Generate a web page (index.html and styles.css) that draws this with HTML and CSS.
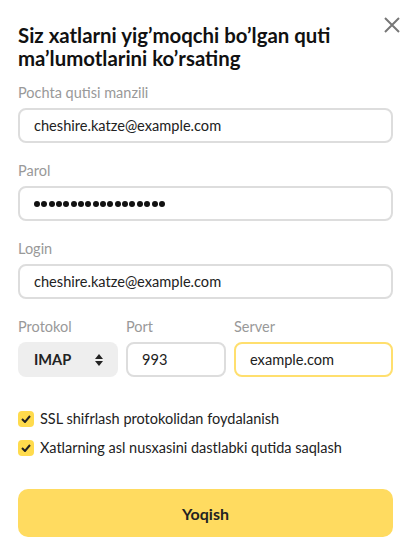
FILE: index.html
```html
<!DOCTYPE html>
<html>
<head>
<meta charset="utf-8">
<link rel="stylesheet" href="styles.css">
</head>
<body>
<div class="dialog">
  <button class="close" aria-label="close">
    <svg width="16" height="16" viewBox="0 0 16 16"><path d="M1 1L15 15M15 1L1 15" stroke="#777" stroke-width="2" fill="none"/></svg>
  </button>
  <h1 class="title">Siz xatlarni yig’moqchi bo’lgan quti ma’lumotlarini ko’rsating</h1>
  <div class="field">
    <div class="label">Pochta qutisi manzili</div>
    <div class="input">cheshire.katze@example.com</div>
  </div>
  <div class="field">
    <div class="label">Parol</div>
    <div class="input password" aria-label="password"><span class="dot"></span><span class="dot"></span><span class="dot"></span><span class="dot"></span><span class="dot"></span><span class="dot"></span><span class="dot"></span><span class="dot"></span><span class="dot"></span><span class="dot"></span><span class="dot"></span><span class="dot"></span><span class="dot"></span><span class="dot"></span><span class="dot"></span><span class="dot"></span><span class="dot"></span><span class="dot"></span></div>
  </div>
  <div class="field">
    <div class="label">Login</div>
    <div class="input">cheshire.katze@example.com</div>
  </div>
  <div class="row">
    <div class="field col-proto">
      <div class="label">Protokol</div>
      <div class="select">IMAP
        <svg class="arrows" width="10" height="14" viewBox="0 0 10 14"><path d="M5 1L9 6H1Z M5 13L9 8H1Z" fill="#222"/></svg>
      </div>
    </div>
    <div class="field col-port">
      <div class="label">Port</div>
      <div class="input small">993</div>
    </div>
    <div class="field col-server">
      <div class="label">Server</div>
      <div class="input small focused">example.com</div>
    </div>
  </div>
  <div class="checks">
    <label class="check"><span class="box"><svg width="10" height="8" viewBox="0 0 10 8"><path d="M1 4L4 7L9 1" stroke="#222" stroke-width="2" fill="none"/></svg></span>SSL shifrlash protokolidan foydalanish</label>
    <label class="check"><span class="box"><svg width="10" height="8" viewBox="0 0 10 8"><path d="M1 4L4 7L9 1" stroke="#222" stroke-width="2" fill="none"/></svg></span>Xatlarning asl nusxasini dastlabki qutida saqlash</label>
  </div>
  <button class="submit">Yoqish</button>
</div>
</body>
</html>
```
FILE: styles.css
```css
* { box-sizing: border-box; }
body {
  margin: 0;
  background: #fff;
  font-family: Lato, "Noto Sans", sans-serif;
  color: #222;
}
.dialog {
  position: relative;
  padding: 24px 17px 0 18px;
}
.close {
  position: absolute;
  top: 17px;
  right: 10px;
  border: 0;
  background: none;
  padding: 0;
  width: 16px;
  height: 16px;
}
.close svg { display: block; }
.title {
  margin: 0 0 14px;
  font-size: 20.4px;
  line-height: 23px;
  font-weight: 700;
  color: #111;
  padding-right: 30px;
}
.field { margin-bottom: 19px; }
.label {
  font-size: 14.5px;
  line-height: 18px;
  color: #999;
  margin-bottom: 6px;
}
.input {
  height: 35px;
  border: 2px solid #ddd;
  border-radius: 8px;
  padding: 0 14px;
  display: flex;
  align-items: center;
  font-size: 14.6px;
  color: #222;
}
.password { gap: 1.35px; }
.dot {
  width: 6px;
  height: 6px;
  border-radius: 50%;
  background: #111;
}
.row { display: flex; gap: 8px; }
.col-proto { width: 100px; }
.col-port { width: 100px; }
.col-server { flex: 1; }
.select {
  height: 35px;
  border-radius: 8px;
  background: #eee;
  padding: 0 14px 0 16px;
  display: flex;
  align-items: center;
  justify-content: space-between;
  font-size: 14.6px;
  font-weight: 700;
}
.focused { border-color: #ffdf6e; }
.checks { margin-top: 15px; display: flex; flex-direction: column; gap: 13px; }
.check {
  display: flex;
  align-items: center;
  gap: 6px;
  font-size: 14.5px;
  line-height: 16px;
}
.box {
  width: 16px;
  height: 16px;
  border-radius: 4px;
  background: #ffdb4d;
  display: flex;
  align-items: center;
  justify-content: center;
}
.submit {
  margin-top: 33px;
  width: 100%;
  height: 48px;
  border: 0;
  border-radius: 10px;
  background: #ffdb60;
  font-family: inherit;
  font-size: 16px;
  font-weight: 700;
  color: #222;
}
```
